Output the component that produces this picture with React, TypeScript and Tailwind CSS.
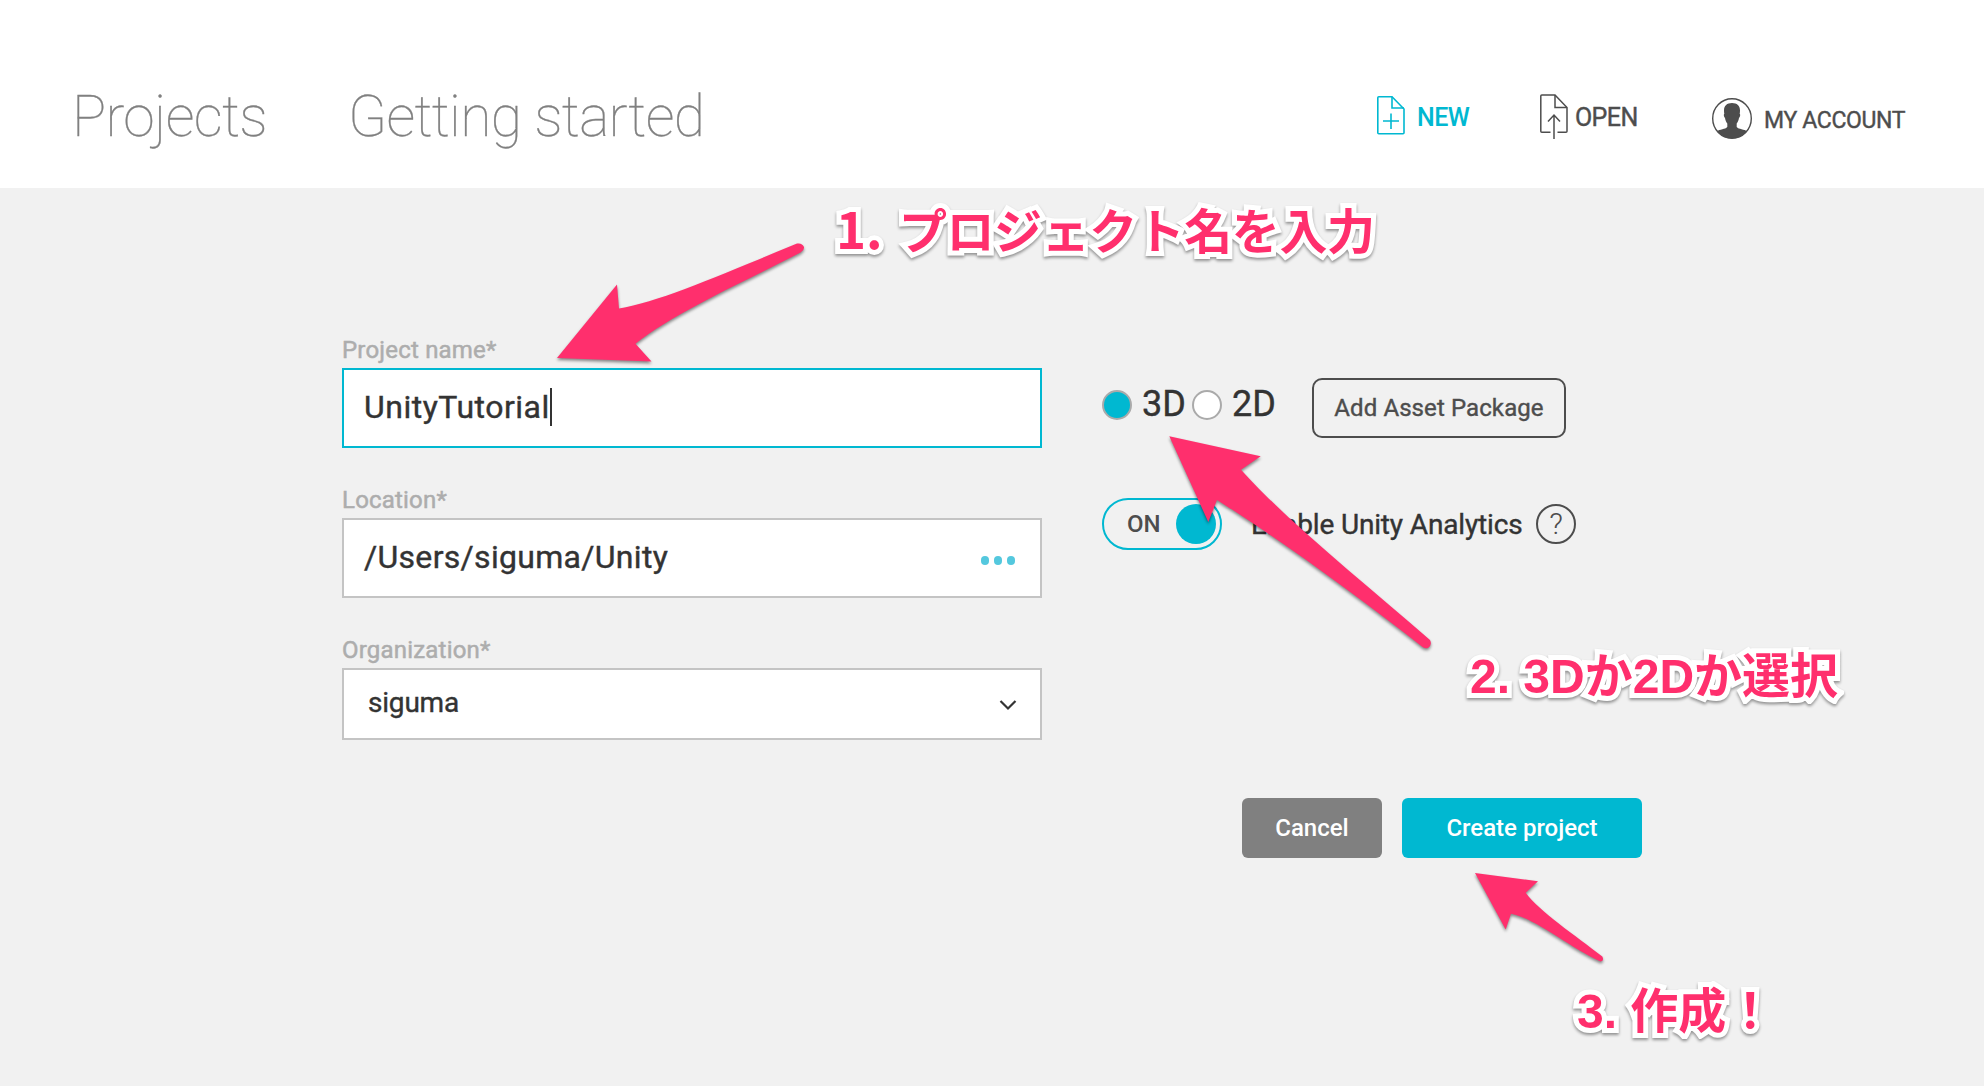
import type { ReactNode } from "react";

function NewFileIcon() {
  return (
    <svg width="28" height="39" viewBox="0 0 28 39" fill="none" stroke="#00b8d1" strokeWidth="1.6">
      <path d="M1.800 .8H15L27 13v23.800c0 .6-.4 1-1 1H1.800c-.6 0-1-.4-1-1v-35c0-.6.4-1 1-1Z" />
      <path d="M15 .8V12h12" />
      <path d="M14 17.500v15.500M6 25h16" />
    </svg>
  );
}

function OpenFileIcon() {
  return (
    <svg width="28" height="46" viewBox="0 0 28 46" fill="none" stroke="#4d4d4d" strokeWidth="1.500">
      <path d="M10.500 38.200H1.800c-.6 0-1-.4-1-1V2c0-.6.4-1 1-1H15L27 13.500v23.700c0 .6-.4 1-1 1h-8.500" />
      <path d="M15 1v12.500h12" />
      <path d="M14 45V21.500M8 27.500l6-6.500 6 6.500" />
    </svg>
  );
}

function AvatarIcon() {
  return (
    <svg width="40" height="41" viewBox="0 0 40 41">
      <defs>
        <clipPath id="avatar">
          <ellipse cx="20" cy="20.500" rx="19.500" ry="20" />
        </clipPath>
      </defs>
      <path
        clipPath="url(#avatar)"
        fill="#4d4d4d"
        d="M20 5c5 0 8 2.700 8 7.500 0 1.200-.1 2.300-.3 3.200.8.6.6 3-.7 4.300-.4 2.300-1.400 4.500-2.300 5.500v3.500c2 2.500 7.500 2 10.800 4.500L37 42H3l1.500-8.500c3.300-2.500 8.800-2 10.800-4.500v-3.500c-1-1-1.900-3.200-2.300-5.500-1.300-1.300-1.500-3.700-.7-4.300-.2-.9-.3-2-.3-3.200C12 7.700 15 5 20 5Z"
      />
      <ellipse cx="20" cy="20.500" rx="19.300" ry="19.700" fill="none" stroke="#4d4d4d" strokeWidth="1.400" />
    </svg>
  );
}

function Header() {
  return (
    <header className="flex h-[188px] items-start bg-white pl-[72px] whitespace-nowrap">
      <nav className="flex pt-[83px] text-[57px] leading-[68px] font-thin tracking-[-0.7px] text-[#808080] [-webkit-text-stroke:0.3px_#808080]">
        <a className="w-[276px]">Projects</a>
        <a className="w-[1029px]">Getting started</a>
      </nav>
      <div className="flex text-[25px] leading-[30px] text-[#4d4d4d]">
        <a className="flex w-[163px] pt-[96px] text-[#00b8d1]">
          <NewFileIcon />
          <span className="ml-[12px] pt-[7px] font-medium tracking-[-0.5px]">NEW</span>
        </a>
        <a className="flex w-[172px] pt-[94px]">
          <OpenFileIcon />
          <span className="ml-[7px] pt-[9px] tracking-[-0.6px] [-webkit-text-stroke:0.4px_#4d4d4d]">OPEN</span>
        </a>
        <a className="flex pt-[98px]">
          <AvatarIcon />
          <span className="ml-[12px] pt-[8px] text-[23px] tracking-[-0.350px] [-webkit-text-stroke:0.4px_#4d4d4d]">MY ACCOUNT</span>
        </a>
      </div>
    </header>
  );
}

function Field({ label, children }: { label: string; children: ReactNode }) {
  return (
    <div>
      <div className="text-[24px] leading-[36px] tracking-[0.200px] text-[#adadad] [-webkit-text-stroke:0.5px_#adadad]">{label}</div>
      {children}
    </div>
  );
}

function Form() {
  return (
    <div className="flex w-[700px] flex-col gap-[34px]">
      <Field label="Project name*">
        <div className="flex h-20 items-center border-2 border-[#00b8d1] bg-white pb-[2px] pl-[20px] text-[32px] leading-[40px]">
          <span className="tracking-[0.500px] [-webkit-text-stroke:0.4px_#333]">UnityTutorial</span>
          <span className="h-[38px] w-[2px] bg-[#333]" />
        </div>
      </Field>
      <Field label="Location*">
        <div className="flex h-20 items-center justify-between border-2 border-[#c4c4c4] bg-white pr-[25px] pb-[2px] pl-[20px] text-[32px] leading-[40px]">
          <span className="tracking-[0.300px] [-webkit-text-stroke:0.4px_#333]">/Users/siguma/Unity</span>
          <span className="flex gap-[4.500px] pt-[7px]">
            <i className="size-[8.500px] rounded-full bg-[#54c8de]" />
            <i className="size-[8.500px] rounded-full bg-[#54c8de]" />
            <i className="size-[8.500px] rounded-full bg-[#54c8de]" />
          </span>
        </div>
      </Field>
      <Field label="Organization*">
        <div className="flex h-[72px] items-center justify-between border-2 border-[#c4c4c4] bg-white pr-[23px] pb-[3px] pl-[24px] text-[28px] leading-[36px]">
          <span className="tracking-[-0.200px] [-webkit-text-stroke:0.4px_#333]">siguma</span>
          <svg className="mt-[4px]" width="18" height="12" viewBox="0 0 18 12" fill="none" stroke="#333" strokeWidth="2.200">
            <path d="M1.500 2 9 9.500 16.500 2" />
          </svg>
        </div>
      </Field>
    </div>
  );
}

function Options() {
  return (
    <div className="flex flex-col gap-[60px] pt-[46px]">
      <div className="flex h-[60px] text-[36px] leading-[40px]">
        <span className="mt-[12px] size-[30px] rounded-full border-2 border-[#aaa] bg-[#00b8d1]" />
        <span className="mt-[6px] ml-[10px] w-[50px] [-webkit-text-stroke:0.4px_#333]">3D</span>
        <span className="mt-[12px] size-[30px] rounded-full border-2 border-[#aaa] bg-white" />
        <span className="mt-[6px] ml-[10px] w-[80px] [-webkit-text-stroke:0.4px_#333]">2D</span>
        <button className="h-[60px] w-[254px] rounded-[10px] border-2 border-[#4d4d4d] text-[24px] leading-[30px] tracking-[0.100px] text-[#4d4d4d] [-webkit-text-stroke:0.4px_#4d4d4d]">
          Add Asset Package
        </button>
      </div>
      <div className="flex h-[52px] items-center">
        <div className="flex h-[52px] w-[120px] items-center justify-between rounded-full border-2 border-[#00b8d1] pr-[4px] pl-[23px] text-[24px] font-medium text-[#4d4d4d]">
          <span className="pb-[1px]">ON</span>
          <span className="size-10 rounded-full bg-[#00b8d1]" />
        </div>
        <span className="ml-[29px] w-[285px] pt-[2px] text-[28px] leading-[40px] tracking-[-0.150px] whitespace-nowrap [-webkit-text-stroke:0.4px_#333]">
          Enable Unity Analytics
        </span>
        <span className="flex size-10 items-center justify-center rounded-full border-2 border-[#4d4d4d] text-[30px] leading-[36px] font-light text-[#4d4d4d]">
          ?
        </span>
      </div>
    </div>
  );
}

const arrows = [
  "M557 358 617 284.500 619 308.400C660 302 725 273 797 243.600Q802 242.500 804 247 804.500 250 800.500 252.500C748 280 677 311 635.500 343.700L651.500 361.500Z",
  "M1169.300 436.300 1260.700 456.300 1241 469.700C1290 524 1365 583 1430 640Q1432.500 645 1428 648 1425.500 649 1422.500 647C1360 598 1285 543 1217 500L1208.300 522Z",
  "M1475 873 1538 881.200 1525.700 892.700C1540 912 1575 935 1602.300 956.500Q1604.500 961 1600.500 961.500C1570 948 1535 918 1511 913.700L1505.700 929.500Z",
];

function Arrows() {
  return (
    <svg
      className="absolute top-0 left-0 drop-shadow-[0_2px_1.500px_rgba(0,0,0,0.45)]"
      width="1984"
      height="1086"
      fill="#ff2f6d"
    >
      {arrows.map((d) => (
        <path key={d} d={d} />
      ))}
    </svg>
  );
}

function Note({ className, children }: { className: string; children: ReactNode }) {
  return (
    <div
      className={`absolute text-[48px] leading-[60px] font-bold whitespace-nowrap text-[#ff2f6d] drop-shadow-[0_2px_1.500px_rgba(0,0,0,0.4)] [paint-order:stroke_fill] [-webkit-text-stroke:10px_white] [stroke-linejoin:round] ${className}`}
    >
      {children}
    </div>
  );
}

export default function App() {
  return (
    <div className="relative h-[1086px] w-[1984px] overflow-hidden bg-[#f1f1f1] font-['Roboto',sans-serif] text-[#333]">
      <Header />
      <main className="w-[1642px] pt-[144px] pl-[342px]">
        <div className="flex gap-[60px]">
          <Form />
          <Options />
        </div>
        <div className="mt-[58px] flex justify-end gap-5 text-[24px] leading-[30px] font-medium text-white">
          <button className="h-[60px] w-[140px] rounded-[6px] bg-[#808080]">Cancel</button>
          <button className="h-[60px] w-[240px] rounded-[6px] bg-[#00b8d1]">Create project</button>
        </div>
      </main>
      <Arrows />
      <Note className="top-[197px] left-[836px] flex items-baseline font-['Noto_Sans_CJK_JP',sans-serif]">
        <span className="w-[63px] text-[51px]">1.</span>
        <span className="tracking-[-0.450px]">プロジェクト名を入力</span>
      </Note>
      <Note className="top-[647px] left-[1470px] font-['Liberation_Sans','Noto_Sans_CJK_JP',sans-serif]">
        2. 3Dか2Dか選択
      </Note>
      <Note className="top-[982px] left-[1577px] font-['Liberation_Sans','Noto_Sans_CJK_JP',sans-serif]">
        3. 作成！
      </Note>
    </div>
  );
}
